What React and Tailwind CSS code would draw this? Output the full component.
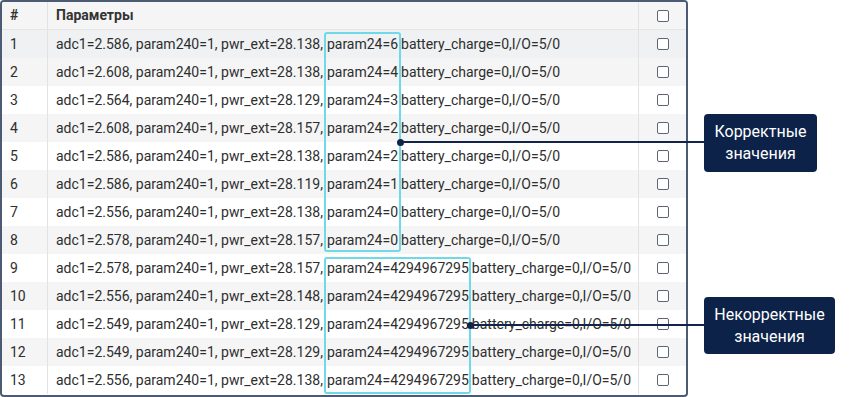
import React from 'react';

const rows = [
  ['1', '2.586', '28.138', '6'],
  ['2', '2.608', '28.138', '4'],
  ['3', '2.564', '28.129', '3'],
  ['4', '2.608', '28.157', '2'],
  ['5', '2.586', '28.138', '2'],
  ['6', '2.586', '28.119', '1'],
  ['7', '2.556', '28.138', '0'],
  ['8', '2.578', '28.157', '0'],
  ['9', '2.578', '28.157', '4294967295'],
  ['10', '2.556', '28.148', '4294967295'],
  ['11', '2.549', '28.129', '4294967295'],
  ['12', '2.549', '28.129', '4294967295'],
  ['13', '2.556', '28.138', '4294967295'],
];

const Checkbox = () => (
  <div className="w-[12px] h-[12px] border border-[#5d6472] rounded-[2px] bg-white" />
);

const Callout = ({ children, className }) => (
  <div className={`absolute bg-[#0d2249] text-white text-[16px] leading-[22px] text-center rounded-[4px] flex items-center justify-center ${className}`}>
    <div>{children}</div>
  </div>
);

export default function App() {
  return (
    <div className="relative w-[851px] h-[397px] bg-white overflow-hidden" style={{ fontFamily: 'Roboto, "Noto Sans", sans-serif' }}>
      {/* Table */}
      <div className="w-[688px] h-[397px] border-2 border-[#4c5a74] rounded-[4px] overflow-hidden text-[14px] text-[#2e2e2e]">
        <div className="flex h-[28px] bg-[#f5f5f5] border-b border-[#e6e6e6]">
          <div className="w-[46px] border-r border-[#e2e2e2] pl-[8px] flex items-center font-bold text-[#333]">#</div>
          <div className="flex-1 pl-[8px] flex items-center font-bold text-[#333]">Параметры</div>
          <div className="w-[48px] border-l border-[#e2e2e2] flex items-center justify-center">
            <Checkbox />
          </div>
        </div>
        {rows.map(([n, adc, pwr, p], i) => {
          const bg = i === 0 ? 'bg-[#eff1f3]' : i % 2 === 1 ? 'bg-[#f5f5f5]' : 'bg-white';
          return (
            <div key={n} className={`flex h-[28px] ${bg}`}>
              <div className="w-[46px] border-r border-[#e2e2e2] pl-[8px] flex items-center">{n}</div>
              <div className="flex-1 pl-[8px] flex items-center whitespace-nowrap">
                <span>adc1={adc}, param240=1, pwr_ext={pwr},</span>
                <span className="ml-[4px] mr-[3px]">param24={p}</span>
                <span>battery_charge=0,I/O=5/0</span>
              </div>
              <div className="w-[48px] border-l border-[#e2e2e2] flex items-center justify-center">
                <Checkbox />
              </div>
            </div>
          );
        })}
      </div>

      {/* Highlight frames */}
      <div className="absolute left-[324px] top-[32px] w-[77px] h-[220px] border-2 border-[#6fd9ea] rounded-[3px]" />
      <div className="absolute left-[324px] top-[257px] w-[147px] h-[137px] border-2 border-[#6fd9ea] rounded-[3px]" />

      {/* Leader lines */}
      <div className="absolute left-[400px] top-[141px] w-[304px] h-[2px] bg-[#13244a]" />
      <div className="absolute left-[397px] top-[139px] w-[7px] h-[7px] rounded-full bg-[#13244a]" />
      <div className="absolute left-[470px] top-[324px] w-[234px] h-[2px] bg-[#13244a]" />
      <div className="absolute left-[467px] top-[322px] w-[7px] h-[7px] rounded-full bg-[#13244a]" />

      <Callout className="left-[704px] top-[114px] w-[113px] h-[58px]">
        Корректные<br />значения
      </Callout>
      <Callout className="left-[704px] top-[297px] w-[131px] h-[57px]">
        Некорректные<br />значения
      </Callout>
    </div>
  );
}
